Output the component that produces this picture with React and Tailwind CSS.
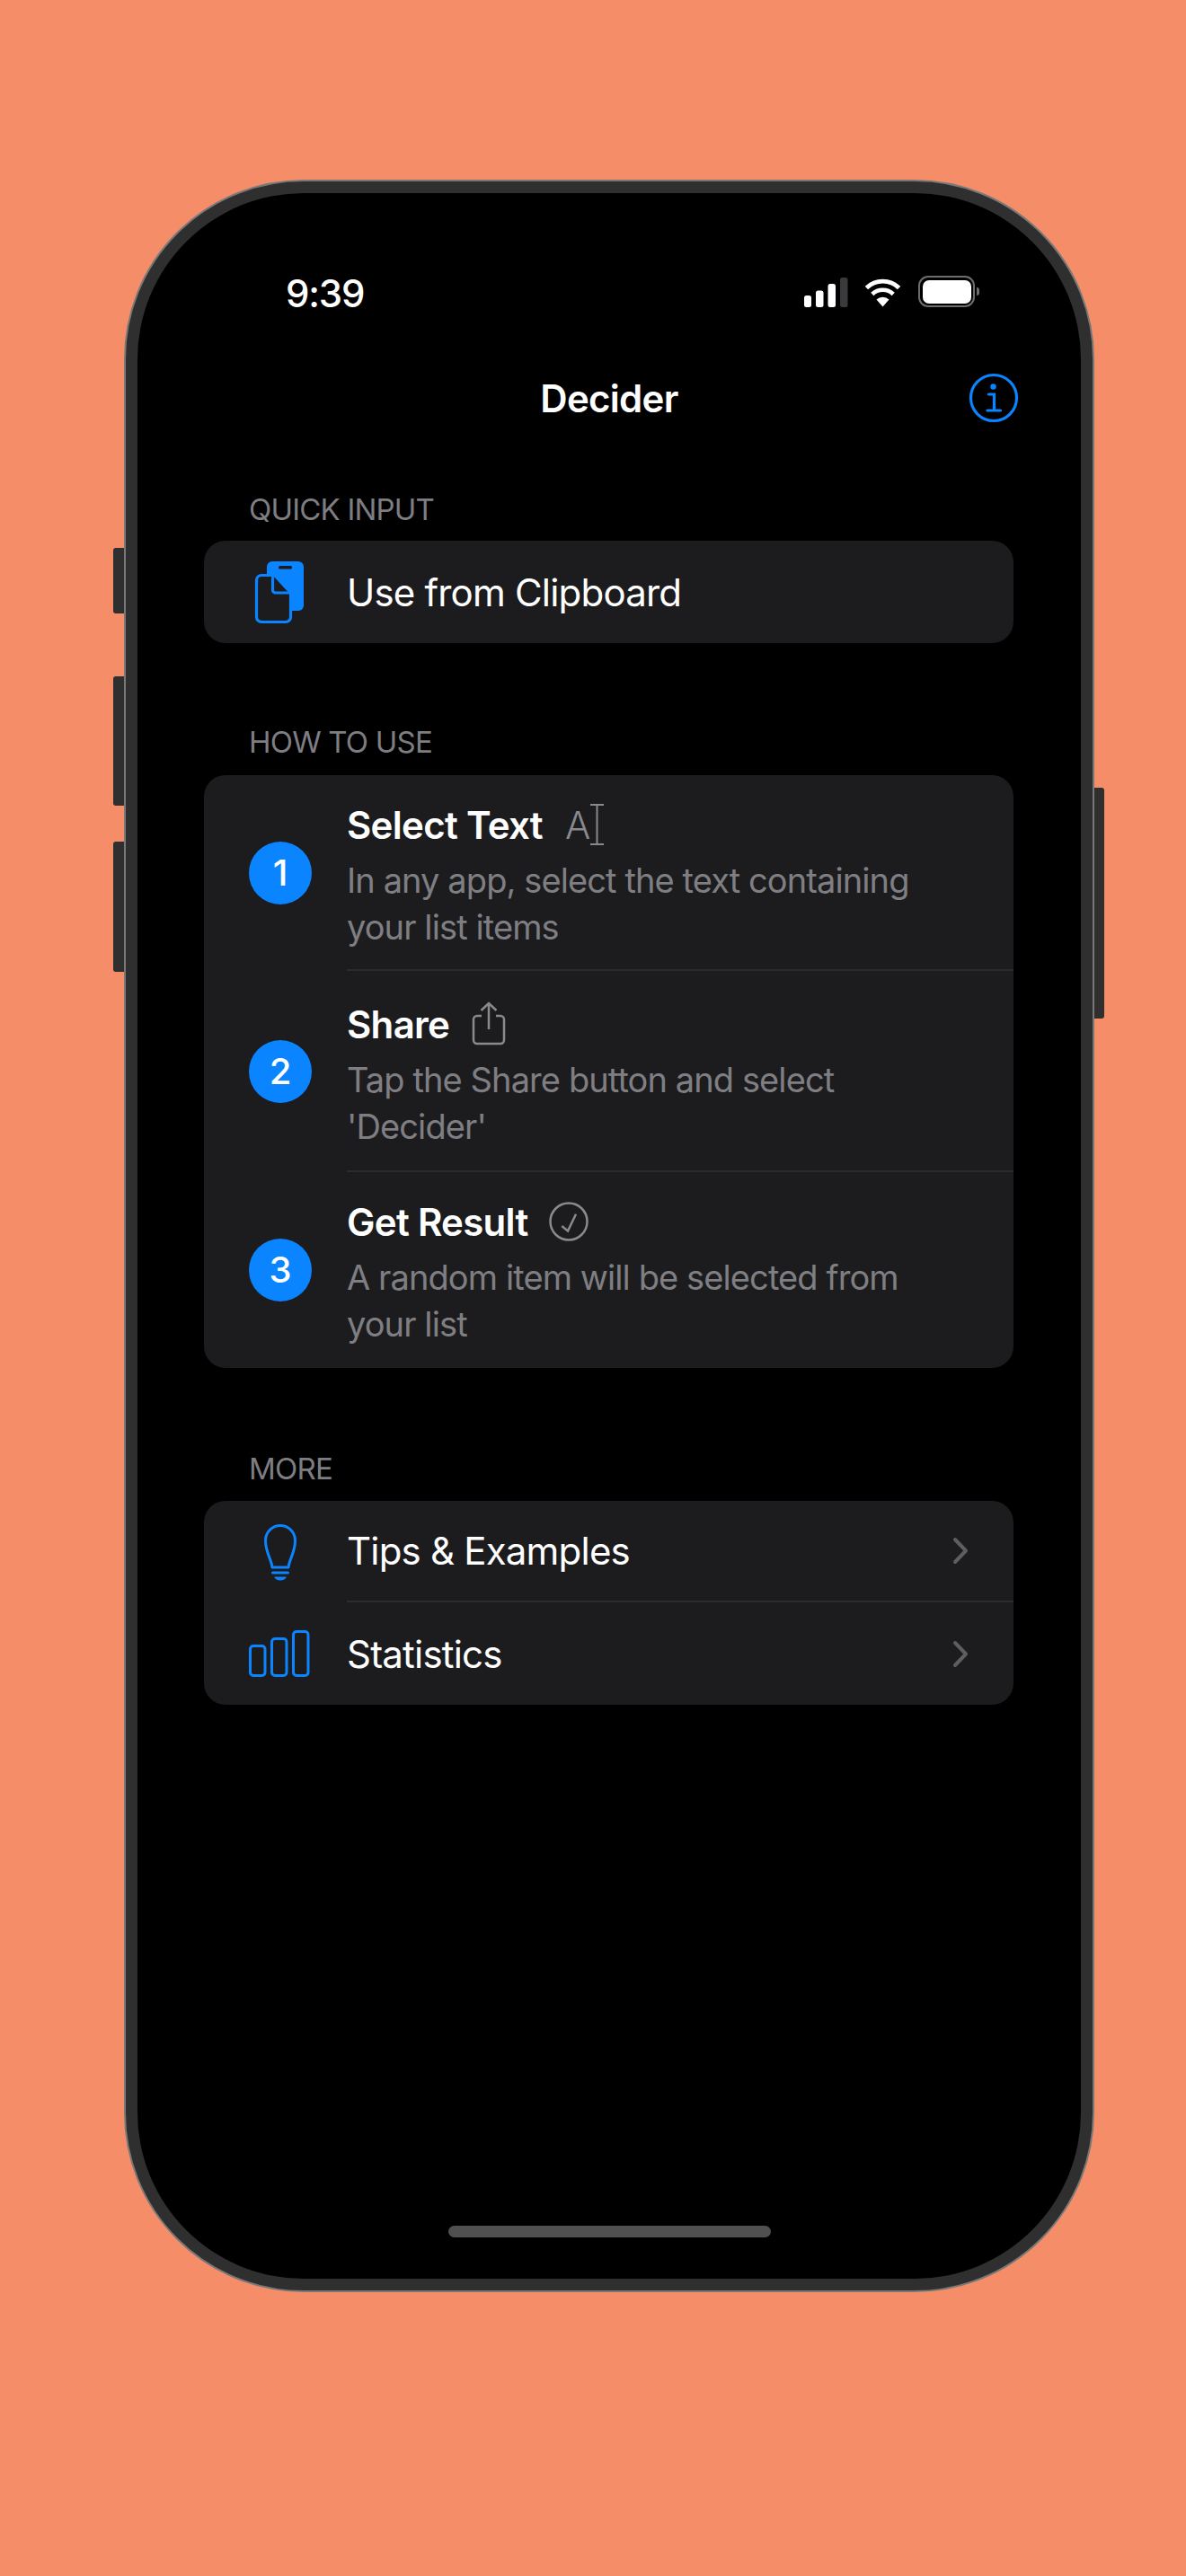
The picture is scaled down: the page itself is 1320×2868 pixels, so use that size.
import React from "react";

const blue = "#0a84ff";

function ClipboardIcon() {
  return (
    <svg width="62" height="78" viewBox="0 0 62 78" fill="none">
      <rect x="17" y="5" width="41" height="55" rx="6" fill={blue} />
      <rect x="30" y="10" width="15" height="3.5" rx="1.5" fill="#1c1c1e" />
      <path
        d="M11 20.500H25.500L43.500 40V67a5.500 5.500 0 0 1-5.500 5.500H11A5.500 5.500 0 0 1 5.500 67V26A5.500 5.500 0 0 1 11 20.500Z"
        fill="#1c1c1e"
        stroke={blue}
        strokeWidth="3.2"
      />
      <path d="M23.500 21V37a3 3 0 0 0 3 3H43" stroke={blue} strokeWidth="3.2" />
    </svg>
  );
}

function InfoIcon() {
  return (
    <svg width="56" height="56" viewBox="0 0 56 56" fill="none" stroke={blue} strokeWidth="3.2">
      <circle cx="28" cy="28" r="25.500" />
      <circle cx="27.500" cy="15.500" r="3.200" fill={blue} stroke="none" />
      <path d="M22.500 24H28.500V42M21 42H35.500" strokeLinecap="round" />
    </svg>
  );
}

function StatusIcons() {
  return (
    <div className="flex items-end mb-[1px]">
      <svg width="49" height="33" viewBox="0 0 49 33" fill="#fff">
        <rect x="0" y="20" width="8" height="13" rx="2.500" />
        <rect x="13" y="14.500" width="8.500" height="18.500" rx="2.500" />
        <rect x="26.500" y="7" width="8.500" height="26" rx="2.500" />
        <rect x="40" y="0" width="8.500" height="33" rx="2.500" fill="#3a3a3c" />
      </svg>
      <svg className="ml-[18px]" width="41" height="33" viewBox="0 0 41 33" fill="none" stroke="#fff">
        <path d="M20.500 32.500L13.500 24.500a10 10 0 0 1 14 0Z" fill="#fff" stroke="none" />
        <path d="M8.800 18.500a16.600 16.600 0 0 1 23.400 0" strokeWidth="4.600" />
        <path d="M2.400 11.500a25.800 25.800 0 0 1 36.200 0" strokeWidth="4.800" />
      </svg>
      <div className="ml-[19px] flex items-center">
        <div className="w-[63px] h-[35px] rounded-[11px] border-2 border-[#6d6d6d] p-[2.5px]">
          <div className="w-full h-full rounded-[7px] bg-white" />
        </div>
        <div className="ml-[2px] w-[3px] h-[9px] rounded-r-full bg-[#6d6d6d]" />
      </div>
    </div>
  );
}

function BulbIcon() {
  return (
    <svg width="38" height="64" viewBox="0 0 38 64" fill="none" stroke={blue} strokeWidth="3">
      <path d="M10 49C9 40 2.500 32 2.500 19.500C2.500 9.500 10 2.500 19 2.500S35.500 9.500 35.500 19.500C35.500 32 29 40 28 49Z" strokeLinejoin="round" />
      <path d="M10.500 55H27.500" strokeLinecap="round" />
      <path d="M12 59.500H26C25 62 22 63.500 19 63.500S13 62 12 59.500Z" fill={blue} stroke="none" />
    </svg>
  );
}

function BarsIcon() {
  return (
    <svg width="68" height="52" viewBox="0 0 68 52" fill="none" stroke={blue} strokeWidth="3">
      <rect x="1.500" y="17.500" width="16.500" height="33" rx="3.500" />
      <rect x="25.500" y="9.500" width="16.500" height="41" rx="3.500" />
      <rect x="49.500" y="1.500" width="16.500" height="49" rx="3.500" />
    </svg>
  );
}

function IBeamIcon() {
  return (
    <svg width="15" height="46" viewBox="0 0 15 46" fill="none" stroke="#8a8a8e" strokeWidth="2">
      <path d="M0 1H15M7.500 1V45M0 45H15" />
    </svg>
  );
}

function ShareIcon() {
  return (
    <svg width="38" height="49" viewBox="0 0 38 49" fill="none" stroke="#8a8a8e" strokeWidth="2.500">
      <path d="M11 16H6a4 4 0 0 0-4 4V43a4 4 0 0 0 4 4H32a4 4 0 0 0 4-4V20a4 4 0 0 0-4-4H27" />
      <path d="M19 2V31" />
      <path d="M10.500 10L19 2L27.500 10" />
    </svg>
  );
}

function CheckIcon() {
  return (
    <svg width="44" height="44" viewBox="0 0 44 44" fill="none" stroke="#8a8a8e" strokeWidth="2.500">
      <circle cx="22" cy="22" r="20.500" />
      <path d="M14.300 27L21 32.500L30 13.700" />
    </svg>
  );
}

function Chevron() {
  return (
    <svg width="18" height="31" viewBox="0 0 18 31" fill="none" stroke="#5e5e60" strokeWidth="4" strokeLinecap="round" strokeLinejoin="round">
      <path d="M3 3L15 15.500L3 28" />
    </svg>
  );
}

function SectionLabel({ children, className }) {
  return (
    <div className={`pl-[50px] text-[#7e7e82] text-[33px] leading-[40px] tracking-[-0.8px] ${className}`}>{children}</div>
  );
}

function Step({ n, title, icon, lines, h, titleMt, divider }) {
  return (
    <div className={`flex items-center ${h}`}>
      <div className="w-[159px] shrink-0 pl-[50px]">
        <div className="w-[70px] h-[70px] rounded-full bg-[#0a84ff] text-white flex items-center justify-center text-[40px] font-medium">
          {n}
        </div>
      </div>
      <div className={`flex-1 h-full flex flex-col ${titleMt} ${divider ? "border-b-2 border-[#2c2c2e]" : ""}`}>
        <div className="flex items-center h-[50px] text-white text-[42px] font-semibold tracking-[-0.7px]">
          {title}
          {icon}
        </div>
        <div className="mt-[11px] text-[#7f7f83] text-[38px] leading-[52px] tracking-[-0.9px]">
          {lines[0]}
          <br />
          {lines[1]}
        </div>
      </div>
    </div>
  );
}

function MoreRow({ icon, label, h, iconPad, divider }) {
  return (
    <div className={`flex items-center ${h}`}>
      <div className={`w-[159px] shrink-0 flex ${iconPad}`}>{icon}</div>
      <div className={`flex-1 h-full flex items-center justify-between pr-[50px] text-white text-[42px] tracking-[-0.8px] ${divider ? "border-b-2 border-[#2c2c2e]" : ""}`}>
        {label}
        <Chevron />
      </div>
    </div>
  );
}

export default function App() {
  return (
    <div
      className="w-[1320px] h-[2868px] bg-[#f58e68] flex pl-[138px] pt-[200px] overflow-hidden"
      style={{ fontFamily: "Inter, 'Liberation Sans', sans-serif" }}
    >
      <div className="relative w-[1080px] h-[2352px]">
        {/* side buttons */}
        <div className="absolute left-[-12px] top-[410px] w-[13px] h-[73px] rounded-l-[3px] bg-[#2f2f2f]" />
        <div className="absolute left-[-12px] top-[553px] w-[13px] h-[144px] rounded-l-[3px] bg-[#2f2f2f]" />
        <div className="absolute left-[-12px] top-[737px] w-[13px] h-[145px] rounded-l-[3px] bg-[#2f2f2f]" />
        <div className="absolute right-[-11px] top-[677px] w-[12px] h-[257px] rounded-r-[3px] bg-[#2f2f2f]" />

        {/* frame */}
        <div className="relative w-full h-full rounded-[200px] bg-[#2f2f2f] border-2 border-[#787878] p-[13px]">
          <div className="w-full h-full rounded-[185px] bg-black flex flex-col">
            <div className="h-[128px] flex items-end justify-between pl-[165px] pr-[113px]">
              <div className="text-white text-[42px] leading-[32px] font-medium tracking-[-1.2px]">9:39</div>
              <StatusIcons />
            </div>

            <div className="relative mt-[72px] h-[56px] flex items-center justify-center">
              <div className="text-white text-[42px] font-semibold tracking-[-0.7px]">Decider</div>
              <div className="absolute right-[69px] top-0">
                <InfoIcon />
              </div>
            </div>

            <div className="mt-[76px] pl-[74px] pr-[75px]">
              <SectionLabel>QUICK INPUT</SectionLabel>
              <div className="mt-[15px] h-[114px] rounded-[24px] bg-[#1c1c1e] flex items-center">
                <div className="w-[159px] shrink-0 flex pl-[53px]">
                  <ClipboardIcon />
                </div>
                <div className="text-white text-[42px] tracking-[-0.8px]">Use from Clipboard</div>
              </div>

              <SectionLabel className="mt-[90px]">HOW TO USE</SectionLabel>
              <div className="mt-[17px] rounded-[24px] bg-[#1c1c1e] overflow-hidden">
                <Step
                  n="1"
                  h="h-[218px]"
                  titleMt="pt-[30px]"
                  divider
                  title="Select Text"
                  lines={["In any app, select the text containing", "your list items"]}
                  icon={
                    <div className="ml-[25px] flex items-center text-[#8a8a8e] font-light">
                      <span className="text-[42px] tracking-normal">A</span>
                      <IBeamIcon />
                    </div>
                  }
                />
                <Step
                  n="2"
                  h="h-[224px]"
                  titleMt="pt-[34px]"
                  divider
                  title="Share"
                  lines={["Tap the Share button and select", "'Decider'"]}
                  icon={
                    <div className="ml-[25px] -mt-[2px]">
                      <ShareIcon />
                    </div>
                  }
                />
                <Step
                  n="3"
                  h="h-[218px]"
                  titleMt="pt-[30px]"
                  title="Get Result"
                  lines={["A random item will be selected from", "your list"]}
                  icon={
                    <div className="ml-[23px]">
                      <CheckIcon />
                    </div>
                  }
                />
              </div>

              <SectionLabel className="mt-[92px]">MORE</SectionLabel>
              <div className="mt-[16px] rounded-[24px] bg-[#1c1c1e] overflow-hidden">
                <MoreRow icon={<BulbIcon />} iconPad="pl-[66px]" label="Tips &amp; Examples" h="h-[113px]" divider />
                <MoreRow icon={<BarsIcon />} iconPad="pl-[50px]" label="Statistics" h="h-[114px]" />
              </div>
            </div>

            <div className="mt-auto mb-[46px] self-center w-[359px] h-[13px] rounded-full bg-[#505050]" />
          </div>
        </div>
      </div>
    </div>
  );
}
